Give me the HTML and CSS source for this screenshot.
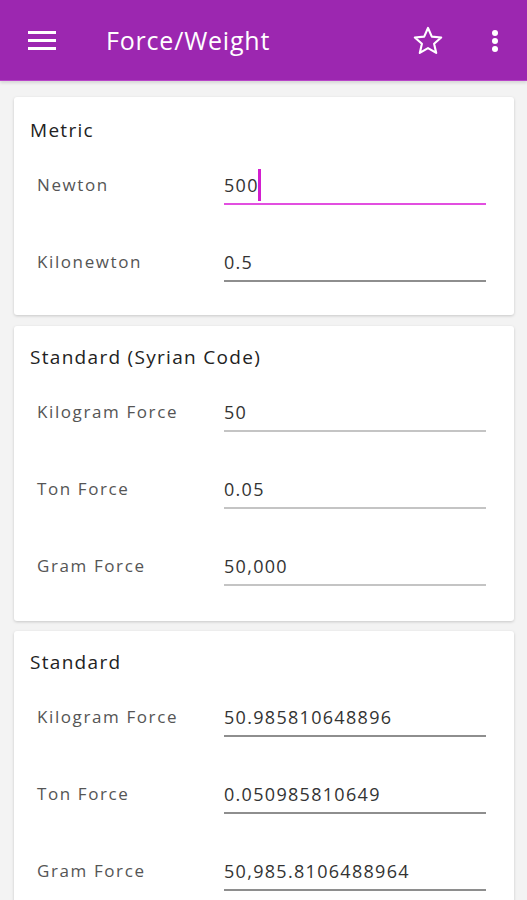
FILE: index.html
```html
<!DOCTYPE html>
<html>
<head>
<meta charset="utf-8">
<link rel="stylesheet" href="styles.css">
</head>
<body>
<header class="appbar">
  <svg class="menu" width="28" height="20" viewBox="0 0 28 20"><rect x="0" y="0" width="28" height="3" fill="#fff"/><rect x="0" y="8" width="28" height="3" fill="#fff"/><rect x="0" y="16" width="28" height="3" fill="#fff"/></svg>
  <div class="title">Force/Weight</div>
  <svg class="star" width="34" height="34" viewBox="0 0 24 24"><path d="M12 2.8l2.7 6.1 6.6.6-5 4.4 1.5 6.5L12 17l-5.8 3.4 1.5-6.5-5-4.4 6.6-.6z" fill="none" stroke="#fff" stroke-width="1.5" stroke-linejoin="round"/></svg>
  <svg class="more" width="8" height="24" viewBox="0 0 8 24"><circle cx="4" cy="4" r="3" fill="#fff"/><circle cx="4" cy="12" r="3" fill="#fff"/><circle cx="4" cy="20" r="3" fill="#fff"/></svg>
</header>
<main class="content">
  <section class="card first">
    <h2 class="card-title">Metric</h2>
    <div class="rows">
      <div class="row"><span class="label">Newton</span><div class="field focused"><span class="value">500</span><span class="cursor"></span></div></div>
      <div class="row"><span class="label">Kilonewton</span><div class="field"><span class="value">0.5</span></div></div>
    </div>
  </section>
  <section class="card">
    <h2 class="card-title">Standard (Syrian Code)</h2>
    <div class="rows">
      <div class="row"><span class="label">Kilogram Force</span><div class="field light"><span class="value">50</span></div></div>
      <div class="row"><span class="label">Ton Force</span><div class="field light"><span class="value">0.05</span></div></div>
      <div class="row"><span class="label">Gram Force</span><div class="field light"><span class="value">50,000</span></div></div>
    </div>
  </section>
  <section class="card">
    <h2 class="card-title">Standard</h2>
    <div class="rows">
      <div class="row"><span class="label">Kilogram Force</span><div class="field"><span class="value">50.985810648896</span></div></div>
      <div class="row"><span class="label">Ton Force</span><div class="field"><span class="value">0.050985810649</span></div></div>
      <div class="row"><span class="label">Gram Force</span><div class="field"><span class="value">50,985.8106488964</span></div></div>
    </div>
  </section>
</main>
</body>
</html>
```
FILE: styles.css
```css
* { box-sizing: border-box; }
html, body { margin: 0; padding: 0; }
body {
  background: #f3f3f3;
  font-family: "Open Sans", "Noto Sans", sans-serif;
  width: 527px;
  height: 900px;
  overflow: hidden;
}
.appbar {
  height: 81px;
  background: #9c27b0;
  border-bottom: 1px solid #b845c8;
  display: flex;
  align-items: center;
  color: #fff;
  box-shadow: 0 2px 3px rgba(0,0,0,0.12);
}
.menu { margin-left: 28px; margin-top: 1px; }
.title {
  margin-left: 50px;
  font-size: 25px;
  letter-spacing: 0.8px;
  flex: 1;
}
.star { margin-right: 46px; margin-top: 2px; }
.more { margin-right: 28px; margin-top: 2px; }
.content {
  padding: 16px 13px 0 14px;
  display: flex;
  flex-direction: column;
  gap: 10px;
}
.card {
  background: #fff;
  border-radius: 3px;
  box-shadow: 0 1px 3px rgba(0,0,0,0.18);
  padding: 16px 28px 35px 16px;
}
.card.first { padding-top: 18px; padding-bottom: 33px; margin-bottom: 1px; }
.card-title {
  margin: 0;
  font-weight: 500;
  font-size: 19px;
  line-height: 30px;
  letter-spacing: 1.3px;
  color: #222;
}
.rows {
  margin-top: 22px;
  display: flex;
  flex-direction: column;
  gap: 39px;
}
.row {
  display: flex;
  align-items: flex-start;
  padding-left: 7px;
}
.label {
  width: 187px;
  font-size: 17px;
  line-height: 36px;
  color: #555;
  letter-spacing: 1.6px;
}
.field {
  flex: 1;
  height: 38px;
  border-bottom: 2px solid #8e8e8e;
  display: flex;
  align-items: center;
  font-size: 18px;
  letter-spacing: 1.3px;
  color: #333;
}
.field.light { border-bottom-color: #c4c4c4; }
.field.focused { border-bottom-color: #e24fe0; }
.value { line-height: 36px; }
.cursor {
  width: 3px;
  height: 32px;
  background: #d21fcf;
  margin-left: -1px;
}
```
